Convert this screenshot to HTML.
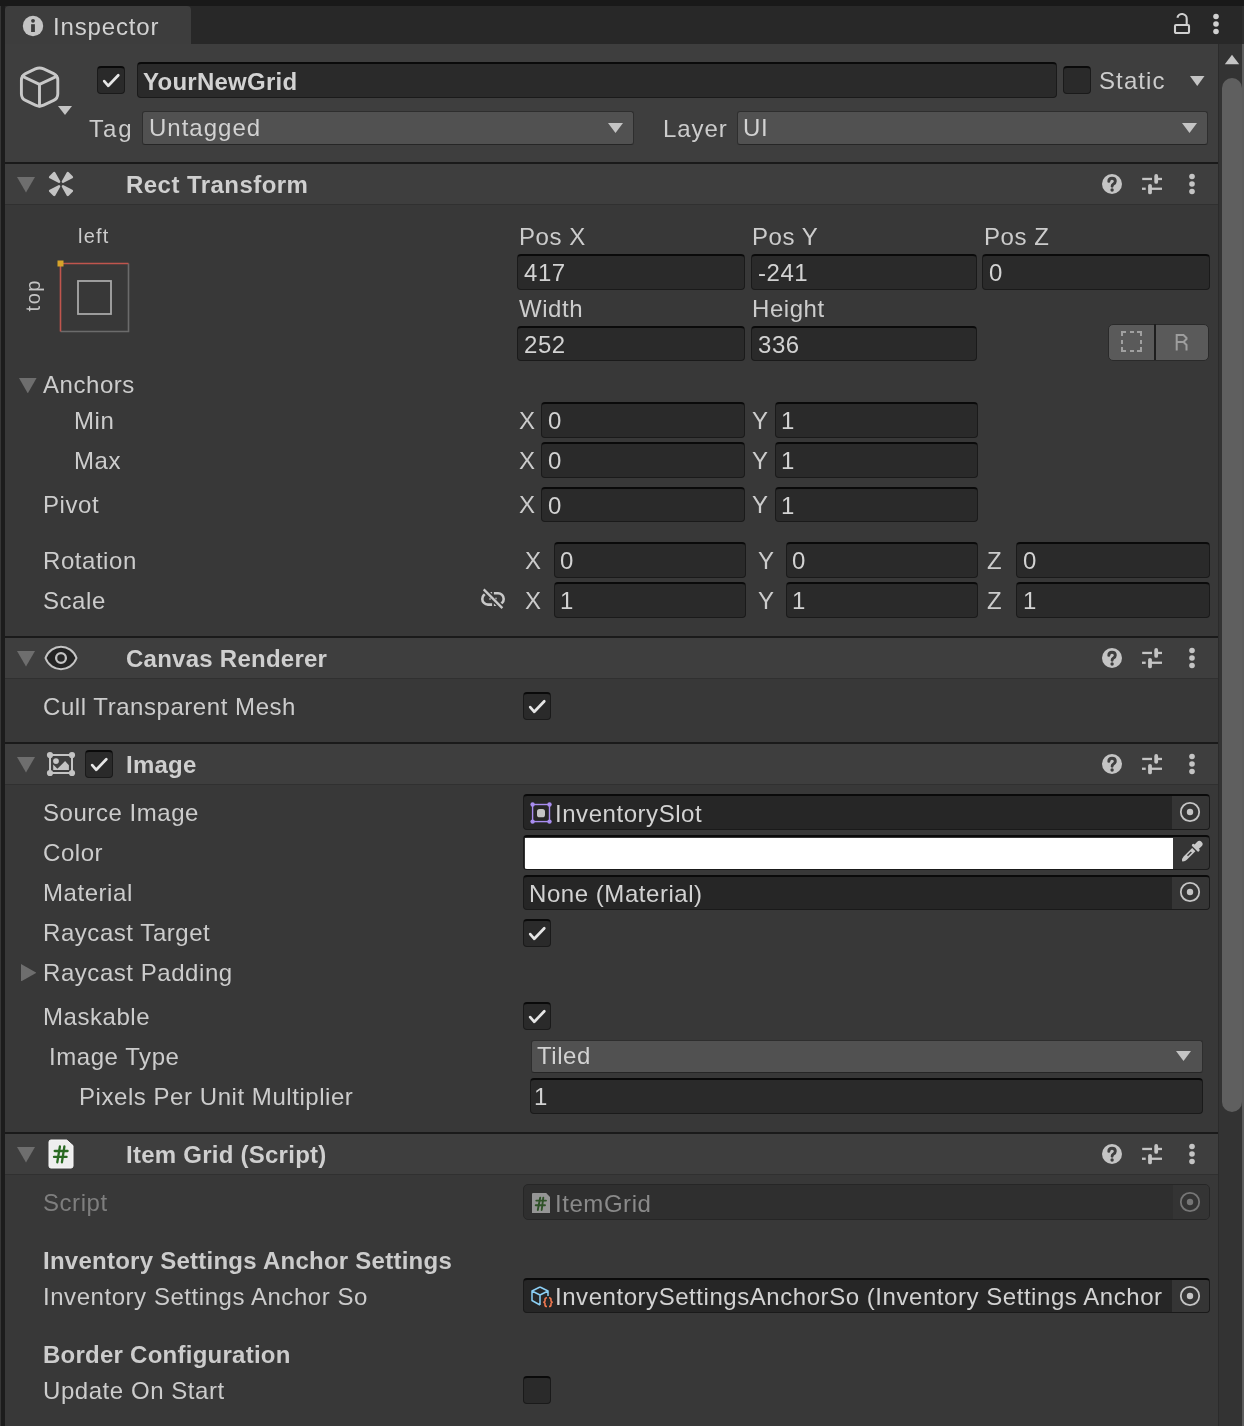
<!DOCTYPE html><html><head><meta charset="utf-8"><style>
*{margin:0;padding:0}
html,body{width:1244px;height:1426px;overflow:hidden;background:#191919}
.a{position:absolute}
.t{position:absolute;will-change:transform;font-family:"Liberation Sans",sans-serif;font-size:24px;line-height:24px;color:#C4C4C4;white-space:nowrap}
.fld{position:absolute;box-sizing:border-box;border:1px solid #1A1A1A;border-top:2px solid #0A0A0A;border-radius:4px}
.cb{position:absolute;box-sizing:border-box;background:#2A2A2A;border:1px solid #1A1A1A;border-top:2px solid #0A0A0A;border-radius:4px}
.dd{position:absolute;box-sizing:border-box;background:#515151;border:1px solid #2E2E2E;border-bottom-color:#262626;border-radius:3px}
</style></head><body>
<div class="a" style="left:0px;top:0px;width:1244px;height:1426px;background:#191919;"></div>
<div class="a" style="left:5px;top:44px;width:1213px;height:1382px;background:#383838;"></div>
<div class="a" style="left:5px;top:6px;width:1239px;height:38px;background:#282828;"></div>
<div class="a" style="left:5px;top:6px;width:186px;height:38px;background:#3D3D3D;border-radius:4px 4px 0 0"></div>
<svg class="a" style="left:22px;top:15px" width="22" height="22" viewBox="0 0 22 22"><circle cx="11" cy="11" r="10.2" fill="#C4C4C4"/><circle cx="11" cy="5.8" r="1.9" fill="#3C3C3C"/><rect x="9.1" y="9.2" width="3.8" height="7.8" fill="#3C3C3C"/></svg>
<div class="t" style="left:52.5px;top:15px;font-size:24px;line-height:24px;color:#D2D2D2;letter-spacing:0.85px;">Inspector</div>
<svg class="a" style="left:1172px;top:11px" width="20" height="24" viewBox="0 0 20 24"><rect x="3" y="14" width="14" height="8" rx="1" fill="none" stroke="#D0D0D0" stroke-width="2.1"/><path d="M14.7 13 V8 A4.7 4.7 0 0 0 5.4 6.8" fill="none" stroke="#D0D0D0" stroke-width="2.1"/></svg>
<svg class="a" style="left:1212px;top:13px" width="8" height="22" viewBox="0 0 8 22"><circle cx="4" cy="3.5" r="2.8" fill="#D0D0D0"/><circle cx="4" cy="11" r="2.8" fill="#D0D0D0"/><circle cx="4" cy="18.5" r="2.8" fill="#D0D0D0"/></svg>
<div class="a" style="left:5px;top:44px;width:1213px;height:118px;background:#3E3E3E;"></div>
<svg class="a" style="left:18px;top:64px" width="44" height="46" viewBox="0 0 44 46"><g fill="none" stroke="#C8C8C8" stroke-width="2.9" stroke-linejoin="round" stroke-linecap="round" transform="translate(0 -0.6) scale(1 1.05)"><path d="M25.61 5.24 L35.69 9.76 Q39.80 11.60 39.80 16.10 L39.80 28.90 Q39.80 33.40 35.69 35.24 L25.61 39.76 Q21.50 41.60 17.40 39.74 L7.50 35.26 Q3.40 33.40 3.40 28.90 L3.40 16.10 Q3.40 11.60 7.50 9.74 L17.40 5.26 Q21.50 3.40 25.61 5.24 Z"/><path d="M4.6 12.3 L21.5 19.9 L38.6 12.3"/><path d="M21.5 19.9 V40.5"/></g></svg>
<svg class="a" style="left:58px;top:105.5px" width="14" height="9" viewBox="0 0 14 9"><path d="M0 0 L14 0 L7.0 9 Z" fill="#C4C4C4"/></svg>
<div class="cb" style="left:97px;top:66px;width:28px;height:28px"><svg width="27" height="27" viewBox="0 0 27 27" style="position:absolute;left:0px;top:-1px"><path d="M6.2 14.1 L10.3 18.8 L20.3 8.2" fill="none" stroke="#E6E6E6" stroke-width="2.7" stroke-linecap="round" stroke-linejoin="round"/></svg></div>
<div class="fld" style="left:137px;top:62px;width:920px;height:35.5px;background:#2A2A2A;"></div>
<div class="t" style="left:143.0px;top:70px;font-size:24px;line-height:24px;font-weight:bold;color:#D2D2D2;letter-spacing:0.25px;">YourNewGrid</div>
<div class="cb" style="left:1063px;top:66px;width:28px;height:28px"></div>
<div class="t" style="left:1098.5px;top:69px;font-size:24px;line-height:24px;color:#CCCCCC;letter-spacing:1.1px;">Static</div>
<svg class="a" style="left:1190px;top:75.5px" width="14.5" height="10" viewBox="0 0 14.5 10"><path d="M0 0 L14.5 0 L7.25 10 Z" fill="#C4C4C4"/></svg>
<div class="t" style="left:89.0px;top:117px;font-size:24px;line-height:24px;color:#CCCCCC;letter-spacing:1.9px;">Tag</div>
<div class="dd" style="left:142px;top:111px;width:492px;height:34px"></div>
<div class="t" style="left:149.0px;top:116.1px;font-size:24px;line-height:24px;color:#D2D2D2;letter-spacing:1.0px;">Untagged</div>
<svg class="a" style="left:607.5px;top:123.0px" width="15" height="10" viewBox="0 0 15 10"><path d="M0 0 L15 0 L7.5 10 Z" fill="#C4C4C4"/></svg>
<div class="t" style="left:663.0px;top:117px;font-size:24px;line-height:24px;color:#CCCCCC;letter-spacing:0.95px;">Layer</div>
<div class="dd" style="left:737px;top:111px;width:471px;height:34px"></div>
<div class="t" style="left:743.0px;top:116.1px;font-size:24px;line-height:24px;color:#D2D2D2;letter-spacing:0.55px;">UI</div>
<svg class="a" style="left:1181.5px;top:123.0px" width="15" height="10" viewBox="0 0 15 10"><path d="M0 0 L15 0 L7.5 10 Z" fill="#C4C4C4"/></svg>
<div class="a" style="left:1218px;top:44px;width:24px;height:1382px;background:#333333;"></div>
<div class="a" style="left:1218px;top:44px;width:1px;height:1382px;background:#2B2B2B;"></div>
<div class="a" style="left:1242px;top:44px;width:2px;height:1382px;background:#5C5C5C;"></div>
<div class="a" style="left:1242px;top:6px;width:2px;height:38px;background:#2E2E2E;"></div>
<svg class="a" style="left:1224px;top:54px" width="16" height="11" viewBox="0 0 16 11"><path d="M0.8 10.2 L15.2 10.2 L8 0.8 Z" fill="#C4C4C4"/></svg>
<div class="a" style="left:1222px;top:78px;width:20px;height:1034px;background:#5F5F5F;border-radius:10px"></div>
<div class="a" style="left:5px;top:162px;width:1213px;height:2px;background:#1A1A1A;"></div>
<div class="a" style="left:5px;top:164px;width:1213px;height:40px;background:#3E3E3E;"></div>
<div class="a" style="left:5px;top:204px;width:1213px;height:1px;background:#303030;"></div>
<svg class="a" style="left:17px;top:177.2px" width="18" height="15.5" viewBox="0 0 18 15.5"><path d="M0 0 L18 0 L9.0 15.5 Z" fill="#6E6E6E"/></svg>
<svg class="a" style="left:45px;top:168px" width="32" height="32" viewBox="0 0 32 32"><g fill="#C4C4C4" stroke="#C4C4C4" stroke-width="2.6" stroke-linejoin="round"><path d="M14 13.6 L9.2 5.2 L5.2 9.2 Z"/><path d="M18 13.6 L22.8 5.2 L26.8 9.2 Z"/><path d="M14 18.4 L5.2 22.8 L9.2 26.8 Z"/><path d="M18 18.4 L26.8 22.8 L22.8 26.8 Z"/></g></svg>
<div class="t" style="left:125.5px;top:172.6px;font-size:24px;line-height:24px;font-weight:bold;color:#CFCFCF;letter-spacing:0.45px;">Rect Transform</div>
<svg class="a" style="left:1101px;top:173.0px" width="22" height="22" viewBox="0 0 22 22"><circle cx="11" cy="11" r="10" fill="#C4C4C4"/><path d="M7.8 8.4 Q7.8 5.2 11 5.2 Q14.3 5.2 14.3 8.2 Q14.3 10 12.5 11 Q11.1 11.8 11.1 13.2" fill="none" stroke="#3E3E3E" stroke-width="2.9" stroke-linecap="round"/><circle cx="11.1" cy="17" r="1.7" fill="#3E3E3E"/></svg>
<svg class="a" style="left:1141px;top:174.0px" width="22" height="22" viewBox="0 0 22 22"><g fill="#C4C4C4"><rect x="1.2" y="3.8" width="9.8" height="2.3"/><rect x="15" y="3.8" width="6" height="2.3"/><rect x="13.3" y="0" width="3.8" height="9.8" rx="1.9"/><rect x="1" y="13.6" width="3.7" height="2.3"/><rect x="9" y="13.6" width="12" height="2.3"/><rect x="7.1" y="9.9" width="3.8" height="10.4" rx="1.9"/></g></svg>
<svg class="a" style="left:1188px;top:173.0px" width="8" height="22" viewBox="0 0 8 22"><circle cx="4" cy="3.5" r="2.8" fill="#C4C4C4"/><circle cx="4" cy="11" r="2.8" fill="#C4C4C4"/><circle cx="4" cy="18.5" r="2.8" fill="#C4C4C4"/></svg>
<div class="t" style="left:77.5px;top:226px;font-size:20px;line-height:20px;color:#CCCCCC;letter-spacing:1.2px;">left</div>
<div class="t" style="left:13px;top:286px;width:40px;height:20px;font-size:20px;line-height:20px;letter-spacing:1.6px;text-indent:1.6px;transform:rotate(-90deg);text-align:center">top</div>
<svg class="a" style="left:56px;top:259px" width="76" height="76" viewBox="0 0 76 76"><path d="M4.5 72.5 H72.5 V4.5" fill="none" stroke="#6B6B6B" stroke-width="1.6"/><path d="M4.5 72.5 V4.5 H72.5" fill="none" stroke="#C0554D" stroke-width="1.6"/><rect x="1.5" y="1.5" width="6" height="6" fill="#D6A32A"/><rect x="22" y="22" width="33" height="33" fill="none" stroke="#A8A8A8" stroke-width="1.8"/></svg>
<div class="t" style="left:519.0px;top:225px;font-size:24px;line-height:24px;color:#CCCCCC;letter-spacing:0.55px;">Pos X</div>
<div class="t" style="left:751.5px;top:225px;font-size:24px;line-height:24px;color:#CCCCCC;letter-spacing:0.55px;">Pos Y</div>
<div class="t" style="left:983.5px;top:225px;font-size:24px;line-height:24px;color:#CCCCCC;letter-spacing:0.55px;">Pos Z</div>
<div class="fld" style="left:517px;top:254px;width:228px;height:35.5px;background:#2A2A2A;"></div>
<div class="t" style="left:523.5px;top:260.9px;font-size:24px;line-height:24px;color:#D2D2D2;letter-spacing:0.55px;">417</div>
<div class="fld" style="left:751px;top:254px;width:226px;height:35.5px;background:#2A2A2A;"></div>
<div class="t" style="left:757.5px;top:260.9px;font-size:24px;line-height:24px;color:#D2D2D2;letter-spacing:0.55px;">-241</div>
<div class="fld" style="left:982px;top:254px;width:227.5px;height:35.5px;background:#2A2A2A;"></div>
<div class="t" style="left:988.5px;top:260.9px;font-size:24px;line-height:24px;color:#D2D2D2;letter-spacing:0.55px;">0</div>
<div class="t" style="left:519.0px;top:297px;font-size:24px;line-height:24px;color:#CCCCCC;letter-spacing:0.55px;">Width</div>
<div class="t" style="left:751.5px;top:297px;font-size:24px;line-height:24px;color:#CCCCCC;letter-spacing:0.55px;">Height</div>
<div class="fld" style="left:517px;top:326px;width:228px;height:35px;background:#2A2A2A;"></div>
<div class="t" style="left:523.5px;top:332.7px;font-size:24px;line-height:24px;color:#D2D2D2;letter-spacing:0.55px;">252</div>
<div class="fld" style="left:751px;top:326px;width:226px;height:35px;background:#2A2A2A;"></div>
<div class="t" style="left:757.5px;top:332.7px;font-size:24px;line-height:24px;color:#D2D2D2;letter-spacing:0.55px;">336</div>
<div class="a" style="left:1107.5px;top:323.5px;width:101px;height:37px;background:#5A5A5A;border:1.5px solid #2A2A2A;box-sizing:border-box;border-radius:5px"></div>
<div class="a" style="left:1154px;top:324px;width:2px;height:36px;background:#1E1E1E;"></div>
<svg class="a" style="left:1121px;top:331px" width="22" height="22" viewBox="0 0 22 22"><path d="M1 5 V1 H5 M16 1 H20 V5 M1 16 V20 H5 M16 20 H20 V16 M9 1 H13 M9 20 H13 M1 9 V13 M20 9 V13" fill="none" stroke="#A0A0A0" stroke-width="2"/></svg>
<svg class="a" style="left:1175px;top:333px" width="14" height="18" viewBox="0 0 14 18"><path d="M1.7 17.5 V2 H8.5 L11.5 5 V6 L8.5 9 H1.7 M8.5 9 L11.5 12 V17.5" fill="none" stroke="#9E9E9E" stroke-width="2"/></svg>
<svg class="a" style="left:19.3px;top:377.7px" width="17.6" height="15.4" viewBox="0 0 17.6 15.4"><path d="M0 0 L17.6 0 L8.8 15.4 Z" fill="#6E6E6E"/></svg>
<div class="t" style="left:42.5px;top:372.8px;font-size:24px;line-height:24px;color:#CCCCCC;letter-spacing:0.55px;">Anchors</div>
<div class="t" style="left:73.5px;top:408.9px;font-size:24px;line-height:24px;color:#CCCCCC;letter-spacing:0.55px;">Min</div>
<div class="t" style="left:73.5px;top:449px;font-size:24px;line-height:24px;color:#CCCCCC;letter-spacing:0.55px;">Max</div>
<div class="t" style="left:42.5px;top:492.79999999999995px;font-size:24px;line-height:24px;color:#CCCCCC;letter-spacing:0.55px;">Pivot</div>
<div class="t" style="left:518.5px;top:408.7px;font-size:24px;line-height:24px;color:#CCCCCC;letter-spacing:0px;">X</div>
<div class="fld" style="left:541px;top:402px;width:203.5px;height:35.5px;background:#2A2A2A;"></div>
<div class="t" style="left:547.5px;top:408.9px;font-size:24px;line-height:24px;color:#D2D2D2;letter-spacing:0.55px;">0</div>
<div class="t" style="left:751.5px;top:408.7px;font-size:24px;line-height:24px;color:#CCCCCC;letter-spacing:0px;">Y</div>
<div class="fld" style="left:774.5px;top:402px;width:203.0px;height:35.5px;background:#2A2A2A;"></div>
<div class="t" style="left:781.0px;top:408.9px;font-size:24px;line-height:24px;color:#D2D2D2;letter-spacing:0.55px;">1</div>
<div class="t" style="left:518.5px;top:448.7px;font-size:24px;line-height:24px;color:#CCCCCC;letter-spacing:0px;">X</div>
<div class="fld" style="left:541px;top:442px;width:203.5px;height:35.5px;background:#2A2A2A;"></div>
<div class="t" style="left:547.5px;top:448.9px;font-size:24px;line-height:24px;color:#D2D2D2;letter-spacing:0.55px;">0</div>
<div class="t" style="left:751.5px;top:448.7px;font-size:24px;line-height:24px;color:#CCCCCC;letter-spacing:0px;">Y</div>
<div class="fld" style="left:774.5px;top:442px;width:203.0px;height:35.5px;background:#2A2A2A;"></div>
<div class="t" style="left:781.0px;top:448.9px;font-size:24px;line-height:24px;color:#D2D2D2;letter-spacing:0.55px;">1</div>
<div class="t" style="left:518.5px;top:493.20000000000005px;font-size:24px;line-height:24px;color:#CCCCCC;letter-spacing:0px;">X</div>
<div class="fld" style="left:541px;top:486.5px;width:203.5px;height:35.5px;background:#2A2A2A;"></div>
<div class="t" style="left:547.5px;top:493.5px;font-size:24px;line-height:24px;color:#D2D2D2;letter-spacing:0.55px;">0</div>
<div class="t" style="left:751.5px;top:493.20000000000005px;font-size:24px;line-height:24px;color:#CCCCCC;letter-spacing:0px;">Y</div>
<div class="fld" style="left:774.5px;top:486.5px;width:203.0px;height:35.5px;background:#2A2A2A;"></div>
<div class="t" style="left:781.0px;top:493.5px;font-size:24px;line-height:24px;color:#D2D2D2;letter-spacing:0.55px;">1</div>
<div class="t" style="left:42.5px;top:549.2px;font-size:24px;line-height:24px;color:#CCCCCC;letter-spacing:0.55px;">Rotation</div>
<div class="t" style="left:42.5px;top:589px;font-size:24px;line-height:24px;color:#CCCCCC;letter-spacing:0.55px;">Scale</div>
<svg class="a" style="left:478px;top:586px" width="30" height="26" viewBox="0 0 30 26"><g fill="none" stroke="#C8C8C8" stroke-width="2.6"><path d="M14.1 7.2 H10 A5.7 5.7 0 0 0 10 18.6 H14.1"/><path d="M15.9 7.2 H20 A5.7 5.7 0 0 1 20 18.6 H15.9"/></g><path d="M5.7 3.4 L24.4 22.1" stroke="#383838" stroke-width="5.5"/><path d="M5.7 3.4 L24.4 22.1" stroke="#C8C8C8" stroke-width="2.3"/><circle cx="12" cy="13" r="1" fill="#9a9a9a"/><circle cx="18" cy="12.5" r="1" fill="#9a9a9a"/></svg>
<div class="t" style="left:524.5px;top:548.7px;font-size:24px;line-height:24px;color:#CCCCCC;letter-spacing:0px;">X</div>
<div class="fld" style="left:553.5px;top:542px;width:192.0px;height:35.5px;background:#2A2A2A;"></div>
<div class="t" style="left:560.0px;top:549.0px;font-size:24px;line-height:24px;color:#D2D2D2;letter-spacing:0.55px;">0</div>
<div class="t" style="left:757.5px;top:548.7px;font-size:24px;line-height:24px;color:#CCCCCC;letter-spacing:0px;">Y</div>
<div class="fld" style="left:785.5px;top:542px;width:192.0px;height:35.5px;background:#2A2A2A;"></div>
<div class="t" style="left:792.0px;top:549.0px;font-size:24px;line-height:24px;color:#D2D2D2;letter-spacing:0.55px;">0</div>
<div class="t" style="left:986.5px;top:548.7px;font-size:24px;line-height:24px;color:#CCCCCC;letter-spacing:0px;">Z</div>
<div class="fld" style="left:1016px;top:542px;width:193.5px;height:35.5px;background:#2A2A2A;"></div>
<div class="t" style="left:1022.5px;top:549.0px;font-size:24px;line-height:24px;color:#D2D2D2;letter-spacing:0.55px;">0</div>
<div class="t" style="left:524.5px;top:588.7px;font-size:24px;line-height:24px;color:#CCCCCC;letter-spacing:0px;">X</div>
<div class="fld" style="left:553.5px;top:582px;width:192.0px;height:35.5px;background:#2A2A2A;"></div>
<div class="t" style="left:560.0px;top:589.0px;font-size:24px;line-height:24px;color:#D2D2D2;letter-spacing:0.55px;">1</div>
<div class="t" style="left:757.5px;top:588.7px;font-size:24px;line-height:24px;color:#CCCCCC;letter-spacing:0px;">Y</div>
<div class="fld" style="left:785.5px;top:582px;width:192.0px;height:35.5px;background:#2A2A2A;"></div>
<div class="t" style="left:792.0px;top:589.0px;font-size:24px;line-height:24px;color:#D2D2D2;letter-spacing:0.55px;">1</div>
<div class="t" style="left:986.5px;top:588.7px;font-size:24px;line-height:24px;color:#CCCCCC;letter-spacing:0px;">Z</div>
<div class="fld" style="left:1016px;top:582px;width:193.5px;height:35.5px;background:#2A2A2A;"></div>
<div class="t" style="left:1022.5px;top:589.0px;font-size:24px;line-height:24px;color:#D2D2D2;letter-spacing:0.55px;">1</div>
<div class="a" style="left:5px;top:636px;width:1213px;height:2px;background:#1A1A1A;"></div>
<div class="a" style="left:5px;top:638px;width:1213px;height:40px;background:#3E3E3E;"></div>
<div class="a" style="left:5px;top:678px;width:1213px;height:1px;background:#303030;"></div>
<svg class="a" style="left:17px;top:651.2px" width="18" height="15.5" viewBox="0 0 18 15.5"><path d="M0 0 L18 0 L9.0 15.5 Z" fill="#6E6E6E"/></svg>
<svg class="a" style="left:43px;top:644px" width="36" height="28" viewBox="0 0 36 28"><path d="M2.5 14 C8 -1, 28 -1, 33.5 14 C28 29, 8 29, 2.5 14 Z" fill="#242424" stroke="#C4C4C4" stroke-width="2" stroke-linejoin="round"/><circle cx="18" cy="14" r="4.9" fill="#262626" stroke="#C4C4C4" stroke-width="2.3"/></svg>
<div class="t" style="left:125.5px;top:646.6px;font-size:24px;line-height:24px;font-weight:bold;color:#CFCFCF;letter-spacing:0.25px;">Canvas Renderer</div>
<svg class="a" style="left:1101px;top:647.0px" width="22" height="22" viewBox="0 0 22 22"><circle cx="11" cy="11" r="10" fill="#C4C4C4"/><path d="M7.8 8.4 Q7.8 5.2 11 5.2 Q14.3 5.2 14.3 8.2 Q14.3 10 12.5 11 Q11.1 11.8 11.1 13.2" fill="none" stroke="#3E3E3E" stroke-width="2.9" stroke-linecap="round"/><circle cx="11.1" cy="17" r="1.7" fill="#3E3E3E"/></svg>
<svg class="a" style="left:1141px;top:648.0px" width="22" height="22" viewBox="0 0 22 22"><g fill="#C4C4C4"><rect x="1.2" y="3.8" width="9.8" height="2.3"/><rect x="15" y="3.8" width="6" height="2.3"/><rect x="13.3" y="0" width="3.8" height="9.8" rx="1.9"/><rect x="1" y="13.6" width="3.7" height="2.3"/><rect x="9" y="13.6" width="12" height="2.3"/><rect x="7.1" y="9.9" width="3.8" height="10.4" rx="1.9"/></g></svg>
<svg class="a" style="left:1188px;top:647.0px" width="8" height="22" viewBox="0 0 8 22"><circle cx="4" cy="3.5" r="2.8" fill="#C4C4C4"/><circle cx="4" cy="11" r="2.8" fill="#C4C4C4"/><circle cx="4" cy="18.5" r="2.8" fill="#C4C4C4"/></svg>
<div class="t" style="left:42.5px;top:694.5px;font-size:24px;line-height:24px;color:#CCCCCC;letter-spacing:0.55px;">Cull Transparent Mesh</div>
<div class="cb" style="left:523px;top:692px;width:28px;height:28px"><svg width="27" height="27" viewBox="0 0 27 27" style="position:absolute;left:0px;top:-1px"><path d="M6.2 14.1 L10.3 18.8 L20.3 8.2" fill="none" stroke="#E6E6E6" stroke-width="2.7" stroke-linecap="round" stroke-linejoin="round"/></svg></div>
<div class="a" style="left:5px;top:742px;width:1213px;height:2px;background:#1A1A1A;"></div>
<div class="a" style="left:5px;top:744px;width:1213px;height:40px;background:#3E3E3E;"></div>
<div class="a" style="left:5px;top:784px;width:1213px;height:1px;background:#303030;"></div>
<svg class="a" style="left:17px;top:757.2px" width="18" height="15.5" viewBox="0 0 18 15.5"><path d="M0 0 L18 0 L9.0 15.5 Z" fill="#6E6E6E"/></svg>
<svg class="a" style="left:46px;top:751px" width="30" height="26" viewBox="0 0 30 26"><g fill="#C4C4C4"><rect x="4" y="4" width="22" height="18" fill="none" stroke="#C4C4C4" stroke-width="2"/><circle cx="4" cy="4" r="3.1"/><circle cx="26" cy="4" r="3.1"/><circle cx="4" cy="22" r="3.1"/><circle cx="26" cy="22" r="3.1"/><circle cx="10" cy="10.1" r="2.9"/><path d="M7.2 13.6 L11.4 17.8 L19.1 10.1 L22.9 14.3 V18.9 H7.2 Z"/></g></svg>
<div class="cb" style="left:85.3px;top:750px;width:27.5px;height:28px"><svg width="27" height="27" viewBox="0 0 27 27" style="position:absolute;left:0px;top:-1px"><path d="M6.2 14.1 L10.3 18.8 L20.3 8.2" fill="none" stroke="#E6E6E6" stroke-width="2.7" stroke-linecap="round" stroke-linejoin="round"/></svg></div>
<div class="t" style="left:125.5px;top:752.6px;font-size:24px;line-height:24px;font-weight:bold;color:#CFCFCF;letter-spacing:0.25px;">Image</div>
<svg class="a" style="left:1101px;top:753.0px" width="22" height="22" viewBox="0 0 22 22"><circle cx="11" cy="11" r="10" fill="#C4C4C4"/><path d="M7.8 8.4 Q7.8 5.2 11 5.2 Q14.3 5.2 14.3 8.2 Q14.3 10 12.5 11 Q11.1 11.8 11.1 13.2" fill="none" stroke="#3E3E3E" stroke-width="2.9" stroke-linecap="round"/><circle cx="11.1" cy="17" r="1.7" fill="#3E3E3E"/></svg>
<svg class="a" style="left:1141px;top:754.0px" width="22" height="22" viewBox="0 0 22 22"><g fill="#C4C4C4"><rect x="1.2" y="3.8" width="9.8" height="2.3"/><rect x="15" y="3.8" width="6" height="2.3"/><rect x="13.3" y="0" width="3.8" height="9.8" rx="1.9"/><rect x="1" y="13.6" width="3.7" height="2.3"/><rect x="9" y="13.6" width="12" height="2.3"/><rect x="7.1" y="9.9" width="3.8" height="10.4" rx="1.9"/></g></svg>
<svg class="a" style="left:1188px;top:753.0px" width="8" height="22" viewBox="0 0 8 22"><circle cx="4" cy="3.5" r="2.8" fill="#C4C4C4"/><circle cx="4" cy="11" r="2.8" fill="#C4C4C4"/><circle cx="4" cy="18.5" r="2.8" fill="#C4C4C4"/></svg>
<div class="t" style="left:42.5px;top:801.1px;font-size:24px;line-height:24px;color:#CCCCCC;letter-spacing:0.55px;">Source Image</div>
<div class="t" style="left:42.5px;top:840.6px;font-size:24px;line-height:24px;color:#CCCCCC;letter-spacing:0.55px;">Color</div>
<div class="t" style="left:42.5px;top:880.7px;font-size:24px;line-height:24px;color:#CCCCCC;letter-spacing:0.55px;">Material</div>
<div class="t" style="left:42.5px;top:920.5px;font-size:24px;line-height:24px;color:#CCCCCC;letter-spacing:0.55px;">Raycast Target</div>
<svg class="a" style="left:20.8px;top:963.5px" width="15.5" height="17.5" viewBox="0 0 15.5 17.5"><path d="M0 0 L15.5 8.75 L0 17.5 Z" fill="#6E6E6E"/></svg>
<div class="t" style="left:42.5px;top:960.8px;font-size:24px;line-height:24px;color:#CCCCCC;letter-spacing:0.55px;">Raycast Padding</div>
<div class="t" style="left:42.5px;top:1005px;font-size:24px;line-height:24px;color:#CCCCCC;letter-spacing:0.55px;">Maskable</div>
<div class="t" style="left:48.5px;top:1045px;font-size:24px;line-height:24px;color:#CCCCCC;letter-spacing:0.55px;">Image Type</div>
<div class="t" style="left:78.5px;top:1085px;font-size:24px;line-height:24px;color:#CCCCCC;letter-spacing:0.55px;">Pixels Per Unit Multiplier</div>
<div class="fld" style="left:523px;top:794px;width:687px;height:35.5px;background:#262626;overflow:hidden"><div style="position:absolute;right:0;top:0;width:37px;height:100%;background:#353535"></div></div>
<svg class="a" style="left:1179px;top:800.75px" width="22" height="22" viewBox="0 0 22 22"><circle cx="11" cy="11" r="9.2" fill="none" stroke="#C4C4C4" stroke-width="1.8"/><circle cx="11" cy="11" r="3.2" fill="#C4C4C4"/></svg>
<svg class="a" style="left:530px;top:802px" width="22" height="22" viewBox="0 0 22 22"><rect x="2.6" y="2.5" width="16.9" height="17.1" fill="none" stroke="#A98DF0" stroke-width="1.4"/><g fill="#A98DF0"><circle cx="2.6" cy="2.5" r="2.2"/><circle cx="19.5" cy="2.5" r="2.2"/><circle cx="2.6" cy="19.6" r="2.2"/><circle cx="19.5" cy="19.6" r="2.2"/></g><rect x="7" y="7" width="8" height="8.3" rx="2.6" fill="#C4C4C4"/></svg>
<div class="t" style="left:554.5px;top:801.5px;font-size:24px;line-height:24px;color:#D2D2D2;letter-spacing:0.55px;">InventorySlot</div>
<div class="fld" style="left:523px;top:834.5px;width:687px;height:35px;background:#353535;overflow:hidden"><div style="position:absolute;left:1px;top:1px;width:648px;height:32px;background:#FFFFFF"></div></div>
<svg class="a" style="left:1174px;top:836px" width="36" height="32" viewBox="0 0 36 32"><g transform="translate(17.8 15.6) rotate(45)" fill="#C8C8C8"><rect x="-3.1" y="-13.8" width="6.2" height="9" rx="3"/><rect x="-4.9" y="-7.1" width="9.8" height="3" rx="1.5"/><path d="M-2.3 -2.8 H2.3 V9.3 Q2.3 12 0 13.8 Q-2.3 12 -2.3 9.3 Z"/><rect x="-0.8" y="0.5" width="1.4" height="5.5" fill="#353535"/></g></svg>
<div class="fld" style="left:523px;top:875px;width:687px;height:34.5px;background:#262626;overflow:hidden"><div style="position:absolute;right:0;top:0;width:37px;height:100%;background:#353535"></div></div>
<svg class="a" style="left:1179px;top:881.25px" width="22" height="22" viewBox="0 0 22 22"><circle cx="11" cy="11" r="9.2" fill="none" stroke="#C4C4C4" stroke-width="1.8"/><circle cx="11" cy="11" r="3.2" fill="#C4C4C4"/></svg>

<div class="t" style="left:528.5px;top:881.5px;font-size:24px;line-height:24px;color:#D2D2D2;letter-spacing:0.55px;">None (Material)</div>
<div class="cb" style="left:523px;top:918.5px;width:28px;height:28px"><svg width="27" height="27" viewBox="0 0 27 27" style="position:absolute;left:0px;top:-1px"><path d="M6.2 14.1 L10.3 18.8 L20.3 8.2" fill="none" stroke="#E6E6E6" stroke-width="2.7" stroke-linecap="round" stroke-linejoin="round"/></svg></div>
<div class="cb" style="left:523px;top:1002px;width:28px;height:28px"><svg width="27" height="27" viewBox="0 0 27 27" style="position:absolute;left:0px;top:-1px"><path d="M6.2 14.1 L10.3 18.8 L20.3 8.2" fill="none" stroke="#E6E6E6" stroke-width="2.7" stroke-linecap="round" stroke-linejoin="round"/></svg></div>
<div class="dd" style="left:530.5px;top:1039.5px;width:672.5px;height:33.0px"></div>
<div class="t" style="left:537.0px;top:1044.1px;font-size:24px;line-height:24px;color:#D2D2D2;letter-spacing:0.55px;">Tiled</div>
<svg class="a" style="left:1176px;top:1051.0px" width="15" height="10" viewBox="0 0 15 10"><path d="M0 0 L15 0 L7.5 10 Z" fill="#C4C4C4"/></svg>
<div class="fld" style="left:529.5px;top:1078px;width:673.5px;height:35.5px;background:#2A2A2A;"></div>
<div class="t" style="left:534.0px;top:1085.0px;font-size:24px;line-height:24px;color:#D2D2D2;letter-spacing:0.55px;">1</div>
<div class="a" style="left:5px;top:1132px;width:1213px;height:2px;background:#1A1A1A;"></div>
<div class="a" style="left:5px;top:1134px;width:1213px;height:40px;background:#3E3E3E;"></div>
<div class="a" style="left:5px;top:1174px;width:1213px;height:1px;background:#303030;"></div>
<svg class="a" style="left:17px;top:1147.2px" width="18" height="15.5" viewBox="0 0 18 15.5"><path d="M0 0 L18 0 L9.0 15.5 Z" fill="#6E6E6E"/></svg>
<svg class="a" style="left:48px;top:1139px" width="26" height="30" viewBox="0 0 26 30"><path d="M1 3 Q1 1 3 1 H18.7 L25 6.6 V27 Q25 29 23 29 H3 Q1 29 1 27 Z" fill="#EEEEEE" stroke="#F8F8F8" stroke-width="1"/><g stroke="#2A6A22" stroke-width="2.3" stroke-linecap="round"><path d="M11.9 7.5 L9.3 23.3"/><path d="M16.4 7.5 L13.9 23.3"/><path d="M6.7 12 H19.6"/><path d="M6 17.9 H18.6"/></g></svg>
<div class="t" style="left:125.5px;top:1142.6px;font-size:24px;line-height:24px;font-weight:bold;color:#CFCFCF;letter-spacing:0.25px;">Item Grid (Script)</div>
<svg class="a" style="left:1101px;top:1143.0px" width="22" height="22" viewBox="0 0 22 22"><circle cx="11" cy="11" r="10" fill="#C4C4C4"/><path d="M7.8 8.4 Q7.8 5.2 11 5.2 Q14.3 5.2 14.3 8.2 Q14.3 10 12.5 11 Q11.1 11.8 11.1 13.2" fill="none" stroke="#3E3E3E" stroke-width="2.9" stroke-linecap="round"/><circle cx="11.1" cy="17" r="1.7" fill="#3E3E3E"/></svg>
<svg class="a" style="left:1141px;top:1144.0px" width="22" height="22" viewBox="0 0 22 22"><g fill="#C4C4C4"><rect x="1.2" y="3.8" width="9.8" height="2.3"/><rect x="15" y="3.8" width="6" height="2.3"/><rect x="13.3" y="0" width="3.8" height="9.8" rx="1.9"/><rect x="1" y="13.6" width="3.7" height="2.3"/><rect x="9" y="13.6" width="12" height="2.3"/><rect x="7.1" y="9.9" width="3.8" height="10.4" rx="1.9"/></g></svg>
<svg class="a" style="left:1188px;top:1143.0px" width="8" height="22" viewBox="0 0 8 22"><circle cx="4" cy="3.5" r="2.8" fill="#C4C4C4"/><circle cx="4" cy="11" r="2.8" fill="#C4C4C4"/><circle cx="4" cy="18.5" r="2.8" fill="#C4C4C4"/></svg>
<div class="t" style="left:42.5px;top:1191px;font-size:24px;line-height:24px;color:#7E7E7E;letter-spacing:0.55px;">Script</div>
<div class="fld" style="left:523px;top:1184px;width:687px;height:35.5px;background:#2F2F2F;border:1.5px solid #262626;border-radius:5px;overflow:hidden"><div style="position:absolute;right:0;top:0;width:36px;height:100%;background:#343434"></div></div>
<svg class="a" style="left:1179px;top:1191px" width="22" height="22" viewBox="0 0 22 22"><circle cx="11" cy="11" r="9.2" fill="none" stroke="#767676" stroke-width="1.8"/><circle cx="11" cy="11" r="3.2" fill="#767676"/></svg>
<svg class="a" style="left:531px;top:1192px" width="20" height="22" viewBox="0 0 20 22"><path d="M1 2 Q1 1 2 1 H15.2 L19 4.9 V21 H1 Z" fill="#959595"/><g stroke="#2F5228" stroke-width="1.9" stroke-linecap="round"><path d="M9.2 5.6 L6.8 18"/><path d="M12.3 5.6 L10.7 18"/><path d="M5.3 8.6 H15"/><path d="M4.7 13.3 H14"/></g></svg>
<div class="t" style="left:554.5px;top:1191.5px;font-size:24px;line-height:24px;color:#8A8A8A;letter-spacing:0.55px;">ItemGrid</div>
<div class="t" style="left:42.5px;top:1249.2px;font-size:24px;line-height:24px;font-weight:bold;color:#CCCCCC;letter-spacing:0.25px;">Inventory Settings Anchor Settings</div>
<div class="t" style="left:42.5px;top:1285.1px;font-size:24px;line-height:24px;color:#CCCCCC;letter-spacing:0.55px;">Inventory Settings Anchor So</div>
<div class="fld" style="left:523px;top:1278px;width:687px;height:35px;background:#262626;overflow:hidden"><div style="position:absolute;right:0;top:0;width:37px;height:100%;background:#353535"></div></div>
<svg class="a" style="left:1179px;top:1284.5px" width="22" height="22" viewBox="0 0 22 22"><circle cx="11" cy="11" r="9.2" fill="none" stroke="#C4C4C4" stroke-width="1.8"/><circle cx="11" cy="11" r="3.2" fill="#C4C4C4"/></svg>
<svg class="a" style="left:530px;top:1285px" width="25" height="24" viewBox="0 0 25 24"><path d="M10 2 L18 6 V11 M10 2 L2 6 V15.5 L10 20 M2 6 L10 10 L18 6 M10 10 V20" fill="none" stroke="#8CD0F5" stroke-width="1.5" stroke-linejoin="round"/><path d="M17 12.8 Q15 12.8 15 14.5 V16 Q15 17 13.3 17.2 Q15 17.4 15 18.4 V20 Q15 21.5 17 21.5 M19 12.8 Q21 12.8 21 14.5 V16 Q21 17 22.7 17.2 Q21 17.4 21 18.4 V20 Q21 21.5 19 21.5" fill="none" stroke="#F07850" stroke-width="1.6"/></svg>
<div class="t" style="left:554.5px;top:1285.3px;font-size:24px;line-height:24px;color:#D2D2D2;letter-spacing:0.55px;">InventorySettingsAnchorSo (Inventory Settings Anchor</div>
<div class="t" style="left:42.5px;top:1343.1px;font-size:24px;line-height:24px;font-weight:bold;color:#CCCCCC;letter-spacing:0.25px;">Border Configuration</div>
<div class="t" style="left:42.5px;top:1378.5px;font-size:24px;line-height:24px;color:#CCCCCC;letter-spacing:0.55px;">Update On Start</div>
<div class="cb" style="left:523px;top:1376px;width:28px;height:28px"></div>
<div class="a" style="left:0px;top:0px;width:5px;height:1426px;background:#1C1C1C;"></div>
<div class="a" style="left:0px;top:0px;width:1px;height:1426px;background:#363636;"></div>
<div class="a" style="left:0px;top:0px;width:1244px;height:6px;background:#191919;"></div>
</body></html>
